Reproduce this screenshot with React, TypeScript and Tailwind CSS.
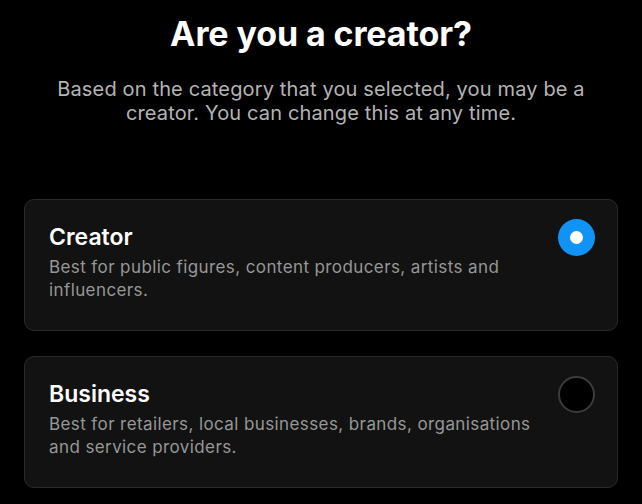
import { FC, useState } from "react";

type Option = { id: string; title: string; desc: string };

const options: Option[] = [
	{ id: "creator", title: "Creator", desc: "Best for public figures, content producers, artists and influencers." },
	{ id: "business", title: "Business", desc: "Best for retailers, local businesses, brands, organisations and service providers." },
];

const Radio: FC<{ checked: boolean }> = ({ checked }) => {
	if (checked)
		return <div className="w-[37px] h-[37px] rounded-full bg-[#1193f5] flex items-center justify-center shrink-0">
			<div className="w-[13px] h-[13px] rounded-full bg-white" />
		</div>
	return <div className="w-[37px] h-[37px] rounded-full bg-black border-2 border-[#3b3b3b] shrink-0" />
}

export default function App() {
	const [selected, setSelected] = useState("creator");

	return <div className="w-[642px] h-[504px] bg-black text-white overflow-hidden flex flex-col" style={{ fontFamily: "Inter, 'Noto Sans', sans-serif" }}>
		<h1 className="text-center font-bold text-[34px] leading-[40px] pt-[14px] tracking-[-0.1px]">Are you a creator?</h1>
		<p className="text-center text-[#b4b4b4] text-[20px] leading-[24px] tracking-[0.15px] mt-[23px] px-[40px]">
			Based on the category that you selected, you may be a<br />creator. You can change this at any time.
		</p>
		<div className="flex flex-col gap-[25px] px-[24px] mt-[74px]">
			{options.map((o) => (
				<div key={o.id} onClick={() => setSelected(o.id)}
					className="h-[132px] rounded-[10px] bg-[#121212] border border-[#2a2a2a] flex flex-row items-start justify-between pl-[24px] pr-[22px] pt-[19px] cursor-pointer">
					<div className="w-[492px] pt-[4px]">
						<div className="text-[23px] leading-[28px] font-semibold">{o.title}</div>
						<div className="text-[#979797] text-[17px] leading-[23px] tracking-[0.4px] mt-[5px]">{o.desc}</div>
					</div>
					<Radio checked={selected === o.id} />
				</div>
			))}
		</div>
	</div>
}
